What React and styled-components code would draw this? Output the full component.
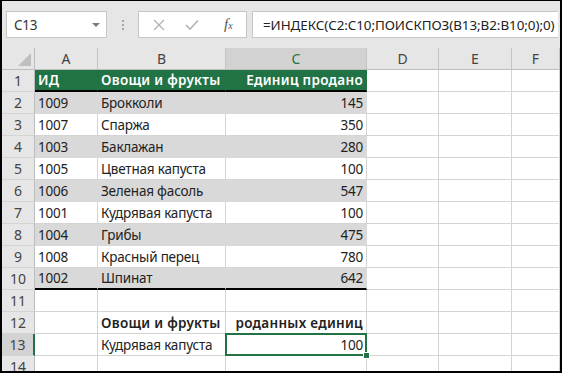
import React from 'react'
import styled, { createGlobalStyle } from 'styled-components'

const GlobalStyle = createGlobalStyle`
  html, body { margin: 0; padding: 0; background: #fff; }
  body { font-family: "Noto Sans", "Open Sans", sans-serif; }
`

const GREEN = '#217346'
const BAND = '#d9d9d9'
const GRID = '#d4d4d4'
const HEAD = '#e6e6e6'

const rows = [
    ['1009', 'Брокколи', '145'],
    ['1007', 'Спаржа', '350'],
    ['1003', 'Баклажан', '280'],
    ['1005', 'Цветная капуста', '100'],
    ['1006', 'Зеленая фасоль', '547'],
    ['1001', 'Кудрявая капуста', '100'],
    ['1004', 'Грибы', '475'],
    ['1008', 'Красный перец', '780'],
    ['1002', 'Шпинат', '642'],
]

const letters = ['A', 'B', 'C', 'D', 'E', 'F']

const App = () => {
    return (
        <>
            <GlobalStyle />
            <Frame>
                <Toolbar>
                    <NameBox>
                        <span>C13</span>
                        <Caret />
                    </NameBox>
                    <Dots><i /><i /><i /></Dots>
                    <FxButtons>
                        <svg width="12" height="12" viewBox="0 0 12 12">
                            <path d="M1 1 L11 11 M11 1 L1 11" stroke="#b4b4b4" strokeWidth="1.4" fill="none" />
                        </svg>
                        <svg width="14" height="12" viewBox="0 0 14 12">
                            <path d="M1 6 L5 10 L13 1.5" stroke="#b4b4b4" strokeWidth="1.6" fill="none" />
                        </svg>
                        <Fx>f<sub>x</sub></Fx>
                    </FxButtons>
                    <FormulaBox>=ИНДЕКС(C2:C10;ПОИСКПОЗ(B13;B2:B10;0);0)</FormulaBox>
                </Toolbar>
                <Sheet>
                    <Corner><Triangle /></Corner>
                    {letters.map(l => (
                        <ColHead key={l} $active={l === 'C'}>{l}</ColHead>
                    ))}

                    <RowHead>1</RowHead>
                    <Cell $bg={GREEN} $color="#fff" $bold $thick>ИД</Cell>
                    <Cell $bg={GREEN} $color="#fff" $bold $thick>Овощи и фрукты</Cell>
                    <Cell $bg={GREEN} $color="#fff" $bold $thick $right>Единиц продано</Cell>
                    <Cell /><Cell /><Cell />

                    {rows.map((r, i) => {
                        const band = i % 2 === 0 ? BAND : undefined
                        const last = i === rows.length - 1
                        return (
                            <React.Fragment key={r[0]}>
                                <RowHead>{i + 2}</RowHead>
                                <Cell $bg={band} $thick={last}>{r[0]}</Cell>
                                <Cell $bg={band} $thick={last}>{r[1]}</Cell>
                                <Cell $bg={band} $thick={last} $right>{r[2]}</Cell>
                                <Cell /><Cell /><Cell />
                            </React.Fragment>
                        )
                    })}

                    <RowHead>11</RowHead>
                    <Cell /><Cell /><Cell /><Cell /><Cell /><Cell />

                    <RowHead>12</RowHead>
                    <Cell />
                    <Cell $bold>Овощи и фрукты</Cell>
                    <Cell $bold $right>роданных единиц</Cell>
                    <Cell /><Cell /><Cell />

                    <RowHead $active>13</RowHead>
                    <Cell />
                    <Cell>Кудрявая капуста</Cell>
                    <Cell $right $selected>100</Cell>
                    <Cell /><Cell /><Cell />

                    <RowHead>14</RowHead>
                    <Cell /><Cell /><Cell /><Cell /><Cell /><Cell />
                </Sheet>
            </Frame>
        </>
    )
}

const Frame = styled.div`
    width: 562px;
    height: 373px;
    box-sizing: border-box;
    border: 2px solid #000;
    border-top-width: 1px;
    overflow: hidden;
    background: #fff;
`

const Toolbar = styled.div`
    height: 47px;
    box-sizing: border-box;
    background: ${HEAD};
    display: flex;
    align-items: center;
    padding: 0 0 0 4px;
`

const NameBox = styled.div`
    width: 101px;
    height: 27px;
    box-sizing: border-box;
    background: #fff;
    border: 1px solid #c6c6c6;
    display: flex;
    align-items: center;
    justify-content: space-between;
    padding: 0 6px 0 7px;
    font-size: 13.5px;
    letter-spacing: -0.2px;
    color: #333;
`

const Caret = styled.span`
    width: 0;
    height: 0;
    border-left: 4px solid transparent;
    border-right: 4px solid transparent;
    border-top: 4px solid #7a7a7a;
`

const Dots = styled.div`
    width: 31px;
    display: flex;
    flex-direction: column;
    align-items: center;
    gap: 2px;
    i {
        width: 2px;
        height: 2px;
        background: #a6a6a6;
    }
`

const FxButtons = styled.div`
    width: 109px;
    height: 27px;
    box-sizing: border-box;
    background: #fff;
    border: 1px solid #c6c6c6;
    display: flex;
    align-items: center;
    padding: 0 0 0 14px;
    gap: 20px;
`

const Fx = styled.span`
    font-family: "Liberation Serif", serif;
    font-style: italic;
    font-size: 15px;
    color: #555;
    margin-left: 5px;
    sub {
        font-size: 10px;
        vertical-align: 0;
    }
`

const FormulaBox = styled.div`
    margin-left: 5px;
    width: 306px;
    height: 27px;
    box-sizing: border-box;
    background: #fff;
    border: 1px solid #c6c6c6;
    border-right: none;
    display: flex;
    align-items: center;
    padding-left: 10px;
    font-size: 13.4px;
    letter-spacing: -0.05px;
    color: #222;
    white-space: nowrap;
    overflow: hidden;
`

const Sheet = styled.div`
    display: grid;
    grid-template-columns: 33px 63px 128px 141px 72px 73px 48px;
    grid-template-rows: repeat(15, 22px);
    font-size: 13.5px;
    letter-spacing: -0.2px;
`

const Corner = styled.div`
    background: ${HEAD};
    border-right: 1px solid #bdbdbd;
    border-bottom: 1px solid #bdbdbd;
    box-sizing: border-box;
    position: relative;
`

const Triangle = styled.div`
    position: absolute;
    right: 3px;
    bottom: 3px;
    width: 0;
    height: 0;
    border-left: 13px solid transparent;
    border-bottom: 13px solid #bfbfbf;
`

const ColHead = styled.div`
    background: ${p => (p.$active ? '#d2d2d2' : HEAD)};
    color: ${p => (p.$active ? GREEN : '#444')};
    border-right: 1px solid #c4c4c4;
    border-bottom: 1px solid #bdbdbd;
    box-sizing: border-box;
    display: flex;
    align-items: center;
    justify-content: center;
    font-size: 14px;
    letter-spacing: 0;
`

const RowHead = styled.div`
    background: ${p => (p.$active ? '#d2d2d2' : HEAD)};
    color: #444;
    border-right: ${p => (p.$active ? `2px solid ${GREEN}` : '1px solid #bdbdbd')};
    border-bottom: 1px solid ${GRID};
    box-sizing: border-box;
    display: flex;
    align-items: center;
    justify-content: center;
    font-size: 14px;
    letter-spacing: 0;
`

const Cell = styled.div`
    position: relative;
    box-sizing: border-box;
    background: ${p => p.$bg || '#fff'};
    color: ${p => p.$color || '#222'};
    font-weight: ${p => (p.$bold ? 600 : 400)};
    letter-spacing: ${p => (p.$bold ? '0.3px' : '-0.2px')};
    border-right: 1px solid ${p => p.$bg || GRID};
    border-bottom: ${p => (p.$thick ? '2px solid #000' : `1px solid ${p.$bg || GRID}`)};
    display: flex;
    align-items: center;
    justify-content: ${p => (p.$right ? 'flex-end' : 'flex-start')};
    padding: 0 3px;
    white-space: nowrap;
    overflow: ${p => (p.$selected ? 'visible' : 'hidden')};
    ${p => p.$selected && `
        &::after {
            content: '';
            position: absolute;
            left: -1px;
            top: -1px;
            right: -1px;
            bottom: -1px;
            border: 2px solid ${GREEN};
        }
        &::before {
            content: '';
            position: absolute;
            right: -4px;
            bottom: -4px;
            width: 5px;
            height: 5px;
            background: ${GREEN};
            border: 1px solid #fff;
            z-index: 1;
        }
    `}
`

export default App
